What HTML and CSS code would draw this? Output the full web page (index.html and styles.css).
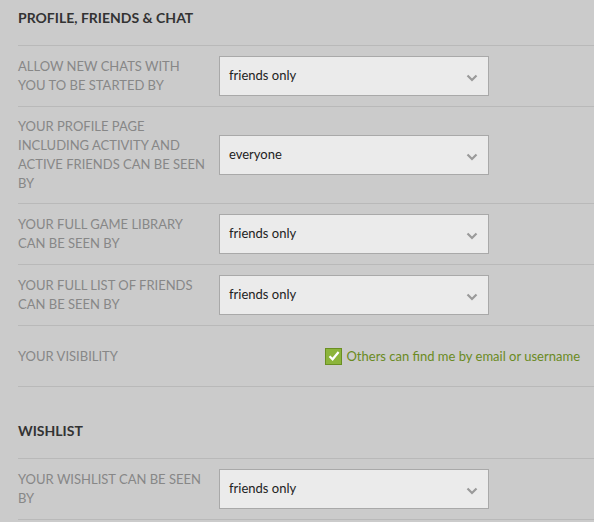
FILE: index.html
```html
<!DOCTYPE html>
<html>
<head>
<meta charset="utf-8">
<link rel="stylesheet" href="styles.css">
</head>
<body>
<div class="page">
  <section class="section">
    <h2 class="heading">PROFILE, FRIENDS &amp; CHAT</h2>
    <div class="row">
      <div class="label">ALLOW NEW CHATS WITH YOU TO BE STARTED BY</div>
      <div class="select"><span>friends only</span><svg class="chev" width="12" height="8" viewBox="0 0 12 8"><path d="M1.5 1.5 L6 6 L10.5 1.5" fill="none" stroke="#9a9a9a" stroke-width="2.2"/></svg></div>
    </div>
    <div class="row">
      <div class="label">YOUR PROFILE PAGE INCLUDING ACTIVITY AND ACTIVE FRIENDS CAN BE SEEN BY</div>
      <div class="select"><span>everyone</span><svg class="chev" width="12" height="8" viewBox="0 0 12 8"><path d="M1.5 1.5 L6 6 L10.5 1.5" fill="none" stroke="#9a9a9a" stroke-width="2.2"/></svg></div>
    </div>
    <div class="row">
      <div class="label">YOUR FULL GAME LIBRARY CAN BE SEEN BY</div>
      <div class="select"><span>friends only</span><svg class="chev" width="12" height="8" viewBox="0 0 12 8"><path d="M1.5 1.5 L6 6 L10.5 1.5" fill="none" stroke="#9a9a9a" stroke-width="2.2"/></svg></div>
    </div>
    <div class="row">
      <div class="label">YOUR FULL LIST OF FRIENDS CAN BE SEEN BY</div>
      <div class="select"><span>friends only</span><svg class="chev" width="12" height="8" viewBox="0 0 12 8"><path d="M1.5 1.5 L6 6 L10.5 1.5" fill="none" stroke="#9a9a9a" stroke-width="2.2"/></svg></div>
    </div>
    <div class="row">
      <div class="label">YOUR VISIBILITY</div>
      <label class="check">
        <span class="box"><svg width="14" height="14" viewBox="0 0 14 14"><path d="M2.5 7.2 L5.6 10.3 L11.6 3" fill="none" stroke="#ffffff" stroke-width="2.2"/></svg></span>
        <span>Others can find me by email or username</span>
      </label>
    </div>
  </section>
  <section class="section second">
    <h2 class="heading">WISHLIST</h2>
    <div class="row">
      <div class="label">YOUR WISHLIST CAN BE SEEN BY</div>
      <div class="select"><span>friends only</span><svg class="chev" width="12" height="8" viewBox="0 0 12 8"><path d="M1.5 1.5 L6 6 L10.5 1.5" fill="none" stroke="#9a9a9a" stroke-width="2.2"/></svg></div>
    </div>
  </section>
</div>
</body>
</html>
```

FILE: styles.css
```css
html, body {
  margin: 0;
  padding: 0;
  background: #cbcbcb;
}
body {
  font-family: Lato, "Open Sans", sans-serif;
}
.page {
  padding-left: 18px;
}
.heading {
  margin: 0;
  padding: 8px 0 17px;
  font-size: 14px;
  line-height: 20px;
  font-weight: 700;
  color: #333333;
  border-bottom: 1px solid #b9b9b9;
}
.second {
  margin-top: 26px;
}
.row {
  display: flex;
  align-items: center;
  min-height: 40px;
  padding: 10px 0;
  border-bottom: 1px solid #b9b9b9;
}
.label {
  width: 190px;
  margin-right: 11px;
  font-size: 13px;
  line-height: 19px;
  color: #878787;
  flex-shrink: 0;
}
.select {
  box-sizing: border-box;
  width: 270px;
  height: 40px;
  background: #ebebeb;
  border: 1px solid #a9a9a9;
  display: flex;
  align-items: center;
  justify-content: space-between;
  padding: 0 9px 0 9px;
  font-size: 13px;
  color: #222222;
}
.select span {
  margin-top: -3px;
}
.chev {
  margin-right: 1px;
  margin-top: 3px;
}
.check {
  margin-left: auto;
  margin-right: 14px;
  display: flex;
  align-items: center;
  gap: 4px;
  font-size: 13px;
  color: #6a8a22;
}
.box {
  box-sizing: border-box;
  width: 17px;
  height: 17px;
  background: #8cb43b;
  border: 1px solid #6a8f22;
  display: flex;
  align-items: center;
  justify-content: center;
}
```
